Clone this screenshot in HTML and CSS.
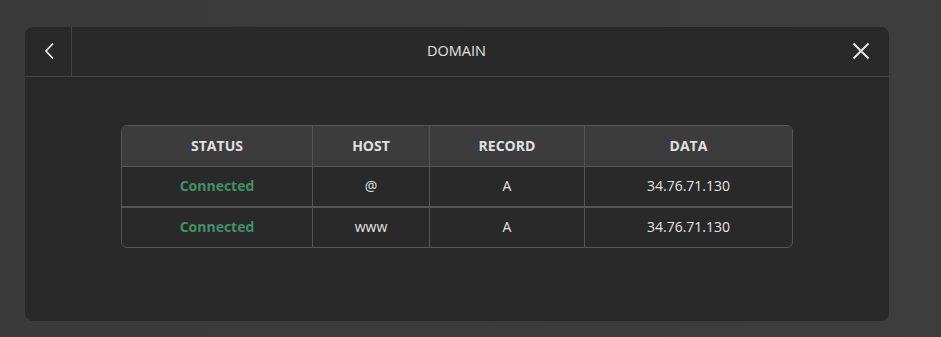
FILE: index.html
```html
<!DOCTYPE html>
<html lang="en">
<head>
  <meta charset="UTF-8">
  <title>Domain</title>
  <link rel="stylesheet" href="styles.css">
</head>
<body>
  <div class="modal">
    <div class="modal-header">
      <button class="back-btn" aria-label="Back">
        <svg width="12" height="18" viewBox="0 0 12 18"><polyline points="9,1.5 2,9 9,16.5" fill="none" stroke="#e6e6e6" stroke-width="1.8"/></svg>
      </button>
      <div class="modal-title">DOMAIN</div>
      <button class="close-btn" aria-label="Close">
        <svg width="18" height="18" viewBox="0 0 18 18"><path d="M1.5 1.5 L16.5 16.5 M16.5 1.5 L1.5 16.5" stroke="#e6e6e6" stroke-width="2" fill="none"/></svg>
      </button>
    </div>
    <div class="modal-body">
      <div class="records">
        <table>
          <thead>
            <tr>
              <th class="col-status">STATUS</th>
              <th class="col-host">HOST</th>
              <th class="col-record">RECORD</th>
              <th class="col-data">DATA</th>
            </tr>
          </thead>
          <tbody>
            <tr>
              <td class="connected">Connected</td>
              <td>@</td>
              <td>A</td>
              <td>34.76.71.130</td>
            </tr>
            <tr>
              <td class="connected">Connected</td>
              <td>www</td>
              <td>A</td>
              <td>34.76.71.130</td>
            </tr>
          </tbody>
        </table>
      </div>
    </div>
  </div>
</body>
</html>
```

FILE: styles.css
```css
body {
  margin: 0;
  height: 337px;
  background: linear-gradient(90deg, #3a3a3a 0%, #3d3d3d 100%);
  font-family: 'Open Sans', 'Liberation Sans', sans-serif;
  color: #e0e0e0;
  overflow: hidden;
}
.modal {
  margin: 27px 0 0 25px;
  width: 864px;
  height: 294px;
  background-color: #292929;
  border-radius: 8px;
  overflow: hidden;
}
.modal-header {
  display: flex;
  align-items: stretch;
  height: 49px;
  border-bottom: 1px solid #444444;
}
.back-btn, .close-btn {
  background: none;
  border: none;
  padding: 0;
  cursor: pointer;
  display: flex;
  align-items: center;
  justify-content: center;
}
.back-btn {
  width: 47px;
  border-right: 1px solid #444444;
  padding-left: 4px;
  padding-bottom: 1px;
}
.close-btn {
  width: 56px;
  padding-bottom: 1px;
}
.modal-title {
  flex: 1;
  display: flex;
  align-items: center;
  justify-content: center;
  font-size: 14.5px;
  color: #e2e2e2;
  padding-left: 8px;
  padding-bottom: 2px;
}
.modal-body {
  padding-top: 48px;
  display: flex;
  justify-content: center;
}
.records {
  border: 1px solid #555555;
  border-radius: 6px;
  overflow: hidden;
}
table {
  border-collapse: collapse;
  font-size: 14px;
}
th, td {
  text-align: center;
  border-right: 1px solid #555555;
  padding: 0 0 2px;
}
th:last-child, td:last-child {
  border-right: none;
}
th {
  height: 38px;
  background-color: #3c3c3c;
  font-weight: 700;
  color: #e0e0e0;
}
td {
  height: 37px;
  border-top: 1px solid #555555;
  color: #e4e4e4;
}
tbody tr + tr td {
  border-top: 2px solid #555555;
}
.col-status { width: 190px; }
.col-host { width: 116px; }
.col-record { width: 154px; }
.col-data { width: 207px; }
.connected {
  color: #42906b;
  font-weight: 700;
}
```
